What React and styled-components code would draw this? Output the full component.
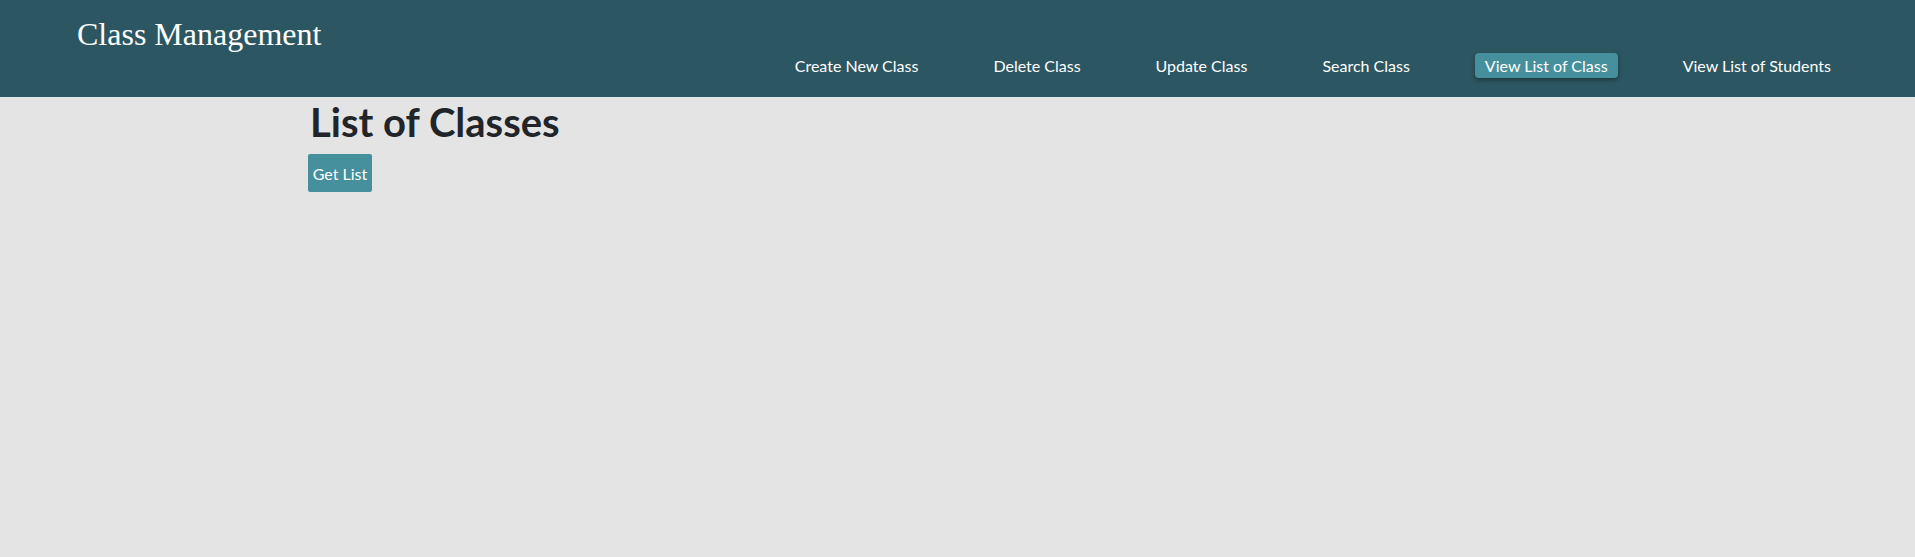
import styled, { createGlobalStyle } from "styled-components";

const GlobalStyle = createGlobalStyle`
  html, body {
    margin: 0;
    padding: 0;
    background: #e4e4e4;
  }
  body {
    font-family: "Lato", "Open Sans", sans-serif;
    color: #212529;
  }
`;

const Header = styled.header`
  height: 97px;
  background: #2c5661;
  display: flex;
  justify-content: space-between;
  align-items: flex-start;
  padding: 0 74px 0 77px;
  box-sizing: border-box;
`;

const Brand = styled.div`
  font-family: "Liberation Serif", "Times New Roman", serif;
  font-size: 32px;
  color: #ffffff;
  margin-top: 14px;
  line-height: 40px;
`;

const Nav = styled.nav`
  display: flex;
  align-items: center;
  gap: 55px;
  margin-top: 53px;
`;

const NavItem = styled.a`
  font-family: "Lato", "Open Sans", sans-serif;
  font-size: 16px;
  line-height: 25px;
  color: #ffffff;
  padding: 0 10px;
  border-radius: 4px;
  text-decoration: none;
  cursor: pointer;
  background: ${(p) => (p.$active ? "#468f9c" : "transparent")};
  box-shadow: ${(p) => (p.$active ? "0 2px 4px rgba(0,0,0,0.35)" : "none")};
`;

const Main = styled.main`
  padding: 1px 0 0 308px;
`;

const Title = styled.h1`
  margin: 0 0 8px 2px;
  font-family: "Lato", "Open Sans", sans-serif;
  font-size: 40px;
  font-weight: 700;
  line-height: 48px;
  color: #212529;
`;

const Button = styled.button`
  width: 64px;
  height: 38px;
  padding: 0;
  border: none;
  border-radius: 2px;
  background: #468f9c;
  color: #ffffff;
  font-family: "Lato", "Open Sans", sans-serif;
  font-size: 16px;
  cursor: pointer;
`;

const links = [
  "Create New Class",
  "Delete Class",
  "Update Class",
  "Search Class",
  "View List of Class",
  "View List of Students",
];

export default function App() {
  return (
    <>
      <GlobalStyle />
      <Header>
        <Brand>Class Management</Brand>
        <Nav>
          {links.map((l) => (
            <NavItem key={l} $active={l === "View List of Class"}>
              {l}
            </NavItem>
          ))}
        </Nav>
      </Header>
      <Main>
        <Title>List of Classes</Title>
        <Button>Get List</Button>
      </Main>
    </>
  );
}
